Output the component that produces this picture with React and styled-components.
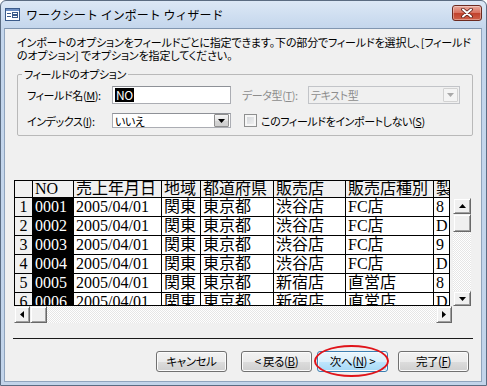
import styled, { createGlobalStyle, css } from "styled-components";

const UI_FONT = `"Noto Sans CJK JP", "Noto Sans", sans-serif`;
const GRID_FONT = `"Liberation Serif", "Noto Sans CJK JP", serif`;

const GlobalStyle = createGlobalStyle`
  html, body {
    margin: 0;
    padding: 0;
    background: #ffffff;
  }
  body {
    font-family: ${UI_FONT};
  }
`;

const Window = styled.div`
  width: 487px;
  height: 386px;
  box-sizing: border-box;
  display: flex;
  flex-direction: column;
  border: 1px solid #5b6c82;
  border-radius: 6px 6px 0 0;
  background: linear-gradient(#dce8f6, #c4d6ec 27px, #c2d4ea);
  padding: 0 4px 3px 3px;
  overflow: hidden;
`;

const TitleBar = styled.div`
  height: 27px;
  display: flex;
  align-items: center;
  padding-left: 1px;
`;

const Title = styled.span`
  margin-left: 6px;
  font-size: 12px;
  color: #000;
  white-space: nowrap;
`;

const CloseButton = styled.div`
  margin-left: auto;
  align-self: flex-start;
  margin-top: 4px;
  width: 30px;
  height: 16px;
  box-sizing: border-box;
  border: 1px solid #6c2a20;
  border-radius: 3px;
  background: linear-gradient(#e9a99b, #d8705e 50%, #c0412c 51%, #d06048);
  box-shadow: inset 0 0 0 1px rgba(255, 255, 255, 0.35);
  display: flex;
  align-items: center;
  justify-content: center;
`;

const Client = styled.div`
  flex: 1;
  display: flex;
  flex-direction: column;
  background: #f0f0f0;
  border: 1px solid #90a4bd;
  border-top-color: #8196b0;
  box-sizing: border-box;
  padding-top: 7px;
  font-size: 11px;
  letter-spacing: -0.4px;
  font-feature-settings: "palt";
  color: #000;
`;

const Description = styled.p`
  margin: 0 0 0 12px;
  font-size: 11px;
  line-height: 13px;
  white-space: nowrap;
  letter-spacing: -0.15px;
`;

const U = styled.span`
  text-decoration: underline;
  text-underline-offset: 1px;
`;

const GroupBox = styled.fieldset`
  margin: 6px 0 0 12px;
  width: 456px;
  box-sizing: border-box;
  border: 1px solid #b9b9b9;
  border-radius: 2px;
  padding: 5px 0 7px 9px;
  display: flex;
  flex-direction: column;
  gap: 9px;
`;

const Legend = styled.legend`
  margin-left: -5px;
  padding: 0 2px;
  line-height: 13px;
`;

const FieldRow = styled.div`
  display: flex;
  align-items: center;
  height: ${(p) => p.$h}px;
`;

const Label = styled.label`
  width: ${(p) => p.$w}px;
  flex: none;
  white-space: nowrap;
  color: ${(p) => (p.$disabled ? "#8d8d8d" : "#000")};
`;

const TextBox = styled.div`
  width: ${(p) => p.$w}px;
  height: 100%;
  box-sizing: border-box;
  border: 1px solid #abadb3;
  border-top-color: #8e9197;
  background: ${(p) => (p.$disabled ? "#f0f0f0" : "#fff")};
  border-color: ${(p) => (p.$disabled ? "#c2c4c8" : undefined)};
  display: flex;
  align-items: center;
  padding: 0 1px 0 2px;
  color: ${(p) => (p.$disabled ? "#8d8d8d" : "#000")};
  flex: none;
`;

const Selected = styled.span`
  background: #000;
  color: #fff;
  font-size: 12px;
  line-height: 14px;
  padding: 0 1px;
`;

const ComboValue = styled.span`
  flex: 1;
  white-space: nowrap;
`;

const DropButton = styled.div`
  width: 15px;
  height: ${(p) => p.$h}px;
  box-sizing: border-box;
  border: 1px solid ${(p) => (p.$disabled ? "#d2d2d2" : "#8f8f8f")};
  border-radius: 1px;
  background: ${(p) =>
    p.$disabled ? "#f4f4f4" : "linear-gradient(#f6f6f6, #e3e3e3 50%, #d4d4d4 51%, #cfcfcf)"};
  display: flex;
  align-items: center;
  justify-content: center;
`;

const Spacer = styled.div`
  width: ${(p) => p.$w}px;
  flex: none;
`;

const CheckBox = styled.div`
  width: 13px;
  height: 13px;
  box-sizing: border-box;
  border: 1px solid #8e8f8f;
  background: linear-gradient(135deg, #cfd2d6, #f4f4f4);
  box-shadow: inset 0 0 0 2px #f6f6f6;
  margin-right: 4px;
  flex: none;
`;

const GridView = styled.div`
  margin: 44px 0 0 9px;
  display: grid;
  grid-template-columns: 439px 18px;
  grid-template-rows: 126px 17px;
`;

const Sheet = styled.div`
  width: 436px;
  height: 126px;
  box-sizing: border-box;
  overflow: hidden;
  border: 1px solid #000;
  border-right: none;
  background: #fff;
  font-family: ${GRID_FONT};
  font-size: 16px;
  letter-spacing: 0;
  font-feature-settings: normal;
`;

const SheetRow = styled.div`
  display: grid;
  grid-template-columns: 18px 41px 88px 39px 73px 72px 88px 16px;
  height: ${(p) => p.$h}px;
`;

const Cell = styled.div`
  box-sizing: border-box;
  border-right: 1px solid #000;
  border-bottom: 1px solid #000;
  overflow: hidden;
  white-space: nowrap;
  line-height: ${(p) => p.$h - 1}px;
  padding-left: ${(p) => (p.$center ? 0 : 2)}px;
  text-align: ${(p) => (p.$center ? "center" : "left")};
  background: ${(p) => (p.$head ? "#f0f0f0" : p.$sel ? "#000" : "#fff")};
  color: ${(p) => (p.$sel ? "#fff" : "#000")};
`;

const VScroll = styled.div`
  grid-column: 2;
  grid-row: 1;
  display: flex;
  flex-direction: column;
  padding-top: 18px;
`;

const HScroll = styled.div`
  grid-column: 1;
  grid-row: 2;
  width: 438px;
  display: flex;
`;

const ScrollButton = styled.div`
  width: ${(p) => p.$w}px;
  height: ${(p) => p.$h}px;
  flex: none;
  box-sizing: border-box;
  background: #f0f0f0;
  border: 1px solid;
  border-color: #f0f0f0 #696969 #696969 #f0f0f0;
  box-shadow: inset 1px 1px #fff, inset -1px -1px #a0a0a0;
  display: flex;
  align-items: center;
  justify-content: center;
`;

const Track = styled.div`
  flex: 1;
  background: repeating-conic-gradient(#e6e6e6 0 25%, #ffffff 0 50%) 0 0 / 2px 2px;
`;

const Separator = styled.div`
  margin: 15px 0 0 8px;
  width: 460px;
  height: 1px;
  background: #1a1a1a;
`;

const ButtonRow = styled.div`
  margin-top: 12px;
  padding-right: 12px;
  display: flex;
  justify-content: flex-end;
  align-items: center;
`;

const ButtonSlot = styled.div`
  position: relative;
  margin-right: ${(p) => p.$gap}px;
`;

const Button = styled.div`
  width: 71px;
  height: 21px;
  box-sizing: border-box;
  border: 1px solid #707070;
  border-radius: 3px;
  background: linear-gradient(#f2f2f2, #ebebeb 50%, #dddddd 51%, #cfcfcf);
  box-shadow: inset 0 0 0 1px #fbfbfb;
  display: flex;
  align-items: center;
  justify-content: center;
  white-space: nowrap;
  line-height: 13px;
  font-size: 11.5px;
  ${(p) =>
    p.$active &&
    css`
      border-color: #3c7fb1;
      background: linear-gradient(#eaf6fd, #d9f0fc 50%, #bee6fd 51%, #a7d9f5);
      box-shadow: inset 0 0 0 1px #f4fbfe;
    `}
`;

const Annotation = styled.span`
  position: absolute;
  left: -3px;
  top: -6px;
  width: 75px;
  height: 32px;
  box-sizing: border-box;
  border: 2px solid #e0141a;
  border-radius: 50%;
  pointer-events: none;
`;

const Arrow = ({ dir, color = "#000" }) => {
  const pts = {
    up: "0,4 7,4 3.5,0",
    down: "0,0 7,0 3.5,4",
    left: "4,0 4,7 0,3.5",
    right: "0,0 0,7 4,3.5",
  }[dir];
  const vertical = dir === "up" || dir === "down";
  return (
    <svg width={vertical ? 7 : 4} height={vertical ? 4 : 7} viewBox={vertical ? "0 0 7 4" : "0 0 4 7"}>
      <polygon points={pts} fill={color} />
    </svg>
  );
};

const FormIcon = () => (
  <svg width="15" height="13" viewBox="0 0 15 13">
    <rect x="0.5" y="0.5" width="14" height="12" fill="#fff" stroke="#3b5b8a" />
    <rect x="1" y="1" width="13" height="2" fill="#6d8fc4" />
    <rect x="2" y="5" width="4" height="1" fill="#3b5b8a" />
    <rect x="2" y="8" width="4" height="1" fill="#3b5b8a" />
    <rect x="7.5" y="4.5" width="5" height="2" fill="#fff" stroke="#3b5b8a" />
    <rect x="7.5" y="7.5" width="5" height="2" fill="#fff" stroke="#3b5b8a" />
  </svg>
);

const CloseGlyph = () => (
  <svg width="12" height="10" viewBox="0 0 12 10">
    <path d="M2 1.5 L10 8.5 M10 1.5 L2 8.5" stroke="#5a1e16" strokeWidth="3.6" strokeLinecap="round" />
    <path d="M2 1.5 L10 8.5 M10 1.5 L2 8.5" stroke="#fff" strokeWidth="2" strokeLinecap="round" />
  </svg>
);

const headers = ["", "NO", "売上年月日", "地域", "都道府県", "販売店", "販売店種別", "製"];

const rows = [
  ["1", "0001", "2005/04/01", "関東", "東京都", "渋谷店", "FC店", "8"],
  ["2", "0002", "2005/04/01", "関東", "東京都", "渋谷店", "FC店", "D"],
  ["3", "0003", "2005/04/01", "関東", "東京都", "渋谷店", "FC店", "9"],
  ["4", "0004", "2005/04/01", "関東", "東京都", "渋谷店", "FC店", "D"],
  ["5", "0005", "2005/04/01", "関東", "東京都", "新宿店", "直営店", "8"],
  ["6", "0006", "2005/04/01", "関東", "東京都", "新宿店", "直営店", "D"],
];

const App = () => {
  return (
    <>
      <GlobalStyle />
      <Window>
        <TitleBar>
          <FormIcon />
          <Title>ワークシート インポート ウィザード</Title>
          <CloseButton>
            <CloseGlyph />
          </CloseButton>
        </TitleBar>
        <Client>
          <Description>
            インポートのオプションをフィールドごとに指定できます。下の部分でフィールドを選択し、[フィールド
            <br />
            のオプション] でオプションを指定してください。
          </Description>

          <GroupBox>
            <Legend>フィールドのオプション</Legend>
            <FieldRow $h={18}>
              <Label $w={85}>
                フィールド名(<U>M</U>):
              </Label>
              <TextBox $w={119}>
                <Selected>NO</Selected>
              </TextBox>
              <Spacer $w={11} />
              <Label $w={66} $disabled>
                データ型(<U>T</U>):
              </Label>
              <TextBox $w={152} $disabled>
                <ComboValue>テキスト型</ComboValue>
                <DropButton $h={14} $disabled>
                  <Arrow dir="down" color="#a9a9a9" />
                </DropButton>
              </TextBox>
            </FieldRow>
            <FieldRow $h={15}>
              <Label $w={85}>
                インデックス(<U>I</U>):
              </Label>
              <TextBox $w={119}>
                <ComboValue>いいえ</ComboValue>
                <DropButton $h={13}>
                  <Arrow dir="down" />
                </DropButton>
              </TextBox>
              <Spacer $w={13} />
              <CheckBox />
              <Label>
                このフィールドをインポートしない(<U>S</U>)
              </Label>
            </FieldRow>
          </GroupBox>

          <GridView>
            <Sheet>
              <SheetRow $h={17}>
                {headers.map((h, i) => (
                  <Cell key={i} $h={17} $head>
                    {h}
                  </Cell>
                ))}
              </SheetRow>
              {rows.map((r) => (
                <SheetRow key={r[0]} $h={19}>
                  {r.map((v, i) => (
                    <Cell key={i} $h={19} $head={i === 0} $center={i === 0} $sel={i === 1}>
                      {v}
                    </Cell>
                  ))}
                </SheetRow>
              ))}
            </Sheet>
            <VScroll>
              <ScrollButton $w={18} $h={16}>
                <Arrow dir="up" />
              </ScrollButton>
              <ScrollButton $w={18} $h={18} />
              <Track />
              <ScrollButton $w={18} $h={15}>
                <Arrow dir="down" />
              </ScrollButton>
            </VScroll>
            <HScroll>
              <ScrollButton $w={16} $h={17}>
                <Arrow dir="left" />
              </ScrollButton>
              <ScrollButton $w={17} $h={17} />
              <Track />
              <ScrollButton $w={16} $h={17}>
                <Arrow dir="right" />
              </ScrollButton>
            </HScroll>
          </GridView>

          <Separator />

          <ButtonRow>
            <ButtonSlot $gap={14}>
              <Button>キャンセル</Button>
            </ButtonSlot>
            <ButtonSlot $gap={5}>
              <Button>
                &lt; 戻る(<U>B</U>)
              </Button>
            </ButtonSlot>
            <ButtonSlot $gap={10}>
              <Button $active>
                次へ(<U>N</U>) &gt;
              </Button>
              <Annotation />
            </ButtonSlot>
            <ButtonSlot $gap={0}>
              <Button>
                完了(<U>F</U>)
              </Button>
            </ButtonSlot>
          </ButtonRow>
        </Client>
      </Window>
    </>
  );
};

export default App;
